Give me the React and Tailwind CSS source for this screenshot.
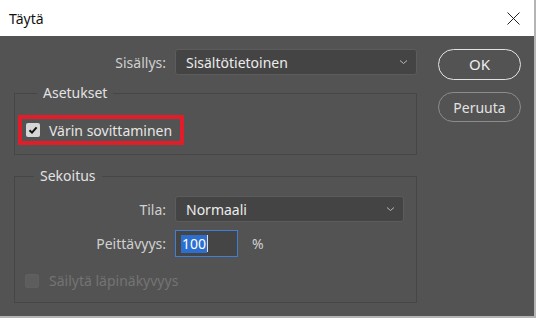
import React from 'react';

const font = { fontFamily: '"Noto Sans", "Open Sans", sans-serif' };

function Chevron() {
  return (
    <svg width="9" height="6" viewBox="0 0 9 6" className="shrink-0">
      <path d="M1 1.5 L4.5 4.5 L8 1.5" fill="none" stroke="#b8b8b8" strokeWidth="1" />
    </svg>
  );
}

function Select({ value, className }) {
  return (
    <div className={`flex items-center justify-between h-[26px] bg-[#444444] border border-[#5c5c5c] rounded-[3px] pl-[10px] pr-[8px] text-[14px] text-[#ececec] ${className}`}>
      <span>{value}</span>
      <Chevron />
    </div>
  );
}

function Checkbox({ checked, disabled }) {
  return (
    <div
      className={`w-[14px] h-[14px] rounded-[2px] flex items-center justify-center ${
        disabled ? 'bg-[#5d5d5d] border border-[#606060]' : 'bg-[#d6d6d6]'
      }`}
    >
      {checked && (
        <svg width="10" height="10" viewBox="0 0 10 10">
          <path d="M1.5 5.2 L4 7.6 L8.6 2.4" fill="none" stroke="#111" strokeWidth="2" />
        </svg>
      )}
    </div>
  );
}

export default function App() {
  return (
    <div className="w-[536px] h-[318px] bg-[#b4b4b4] pr-[2px] pb-[2px]" style={font}>
      <div className="h-full flex flex-col">
        {/* title bar */}
        <div className="h-[36px] bg-white flex items-center justify-between pl-[9px] pr-[14px]">
          <span className="text-[14px] text-[#111]">Täytä</span>
          <svg width="13" height="13" viewBox="0 0 13 13">
            <path d="M0.5 0.5 L12.5 12.5 M12.5 0.5 L0.5 12.5" stroke="#222" strokeWidth="1" />
          </svg>
        </div>

        <div className="flex-1 bg-[#535353] flex pl-[14px] pt-[13px]">
          <div className="w-[403px] flex flex-col">
            <div className="flex items-center">
              <span className="w-[152px] text-right text-[14px] text-[#d0d0d0]">Sisällys:</span>
              <Select value="Sisältötietoinen" className="ml-[9px] w-[242px]" />
            </div>

            {/* Asetukset */}
            <fieldset className="mt-[8px] border border-[#464646] h-[72px] px-[3px]">
              <legend className="ml-[19px] px-[6px] text-[14px] leading-[20px] text-[#e2e2e2]">Asetukset</legend>
              <div className="mt-[12px] w-[166px] h-[30px] border-[4px] border-[#e11d2a] flex items-center pl-[4px]">
                <Checkbox checked />
                <span className="ml-[9px] text-[14px] text-[#e6e6e6]">Värin sovittaminen</span>
              </div>
            </fieldset>

            {/* Sekoitus */}
            <fieldset className="mt-[11px] border border-[#464646] h-[137px]">
              <legend className="ml-[19px] px-[6px] text-[14px] leading-[20px] text-[#e2e2e2]">Sekoitus</legend>
              <div className="flex items-center mt-[10px]">
                <span className="w-[151px] text-right text-[14px] text-[#d0d0d0]">Tila:</span>
                <Select value="Normaali" className="ml-[9px] w-[229px]" />
              </div>
              <div className="flex items-center mt-[8px]">
                <span className="w-[151px] text-right text-[14px] text-[#d0d0d0]">Peittävyys:</span>
                <div className="ml-[9px] w-[63px] h-[27px] bg-[#454545] border border-[#3f7fd6] flex items-center pl-[5px]">
                  <span className="bg-[#2d6fd1] text-white text-[14px] leading-[18px] px-[1px]">100</span>
                  <span className="w-[1px] h-[17px] bg-[#e0e0e0]" />
                </div>
                <span className="ml-[14px] text-[14px] text-[#d0d0d0]">%</span>
              </div>
              <div className="flex items-center mt-[13px] pl-[10px]">
                <Checkbox disabled />
                <span className="ml-[10px] text-[14px] text-[#747474]">Säilytä läpinäkyvyys</span>
              </div>
            </fieldset>
          </div>

          <div className="ml-[21px] flex flex-col">
            <button className="w-[83px] h-[31px] rounded-full border-[1.5px] border-[#e2e2e2] text-[15px] text-[#ededed]">OK</button>
            <button className="mt-[12px] w-[83px] h-[30px] rounded-full border border-[#8c8c8c] text-[14px] text-[#e2e2e2]">Peruuta</button>
          </div>
        </div>
      </div>
    </div>
  );
}
